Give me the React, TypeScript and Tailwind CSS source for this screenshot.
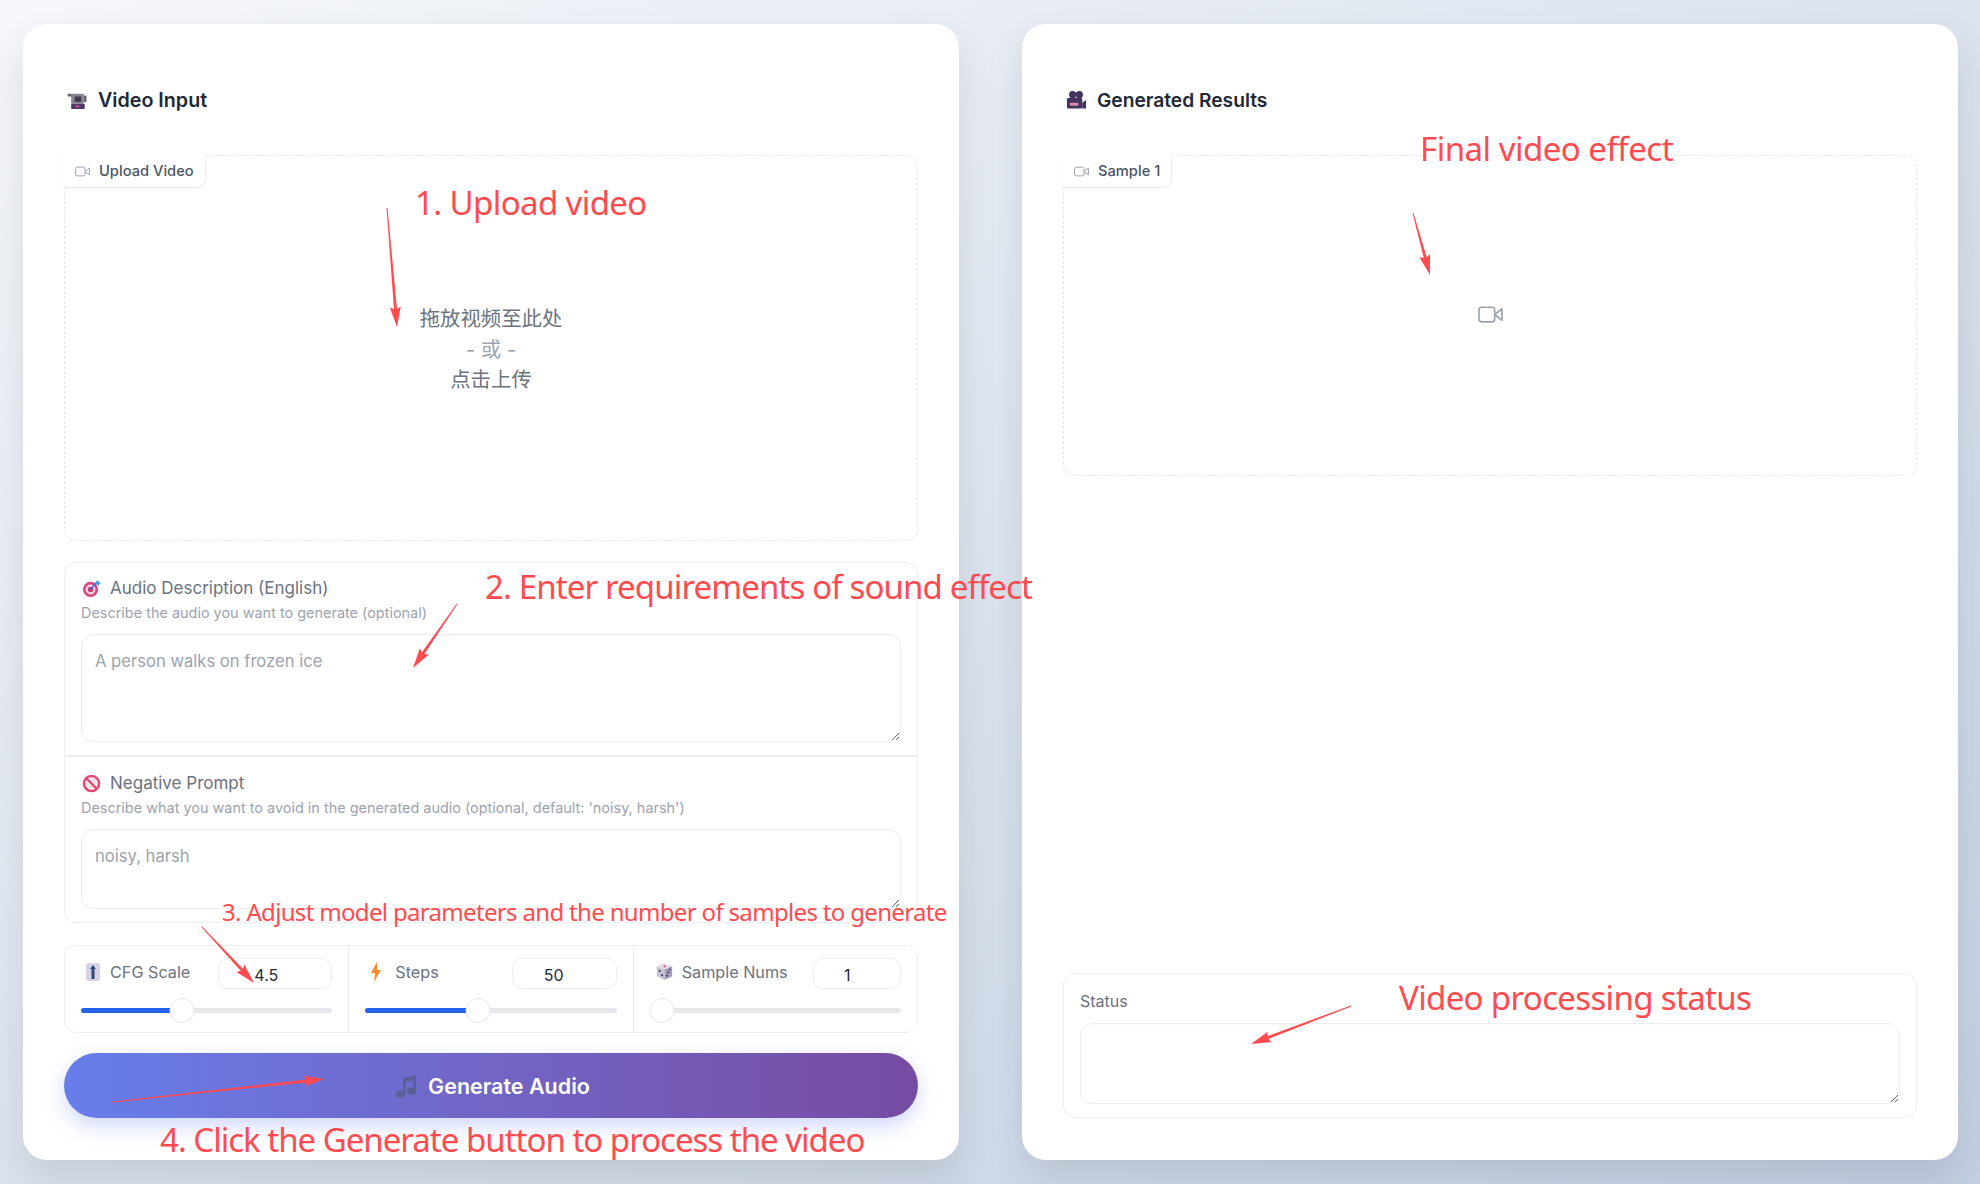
const sans = "font-['Inter','Noto_Sans_CJK_SC',sans-serif]";

function VideoGlyph({ className }: { className: string }) {
  return (
    <svg viewBox="0 0 24 16" fill="none" stroke="currentColor" strokeWidth="1.6" className={className}>
      <rect x="1" y="1" width="15" height="14" rx="2.5" />
      <path d="M16 8l7-5.5v11z" strokeLinejoin="round" />
    </svg>
  );
}

function ProjectorIcon() {
  return (
    <svg viewBox="0 0 22 20" className="h-[18px] w-[21px]">
      <path d="M0 2h6v3H0z" fill="#6b6472" />
      <rect x="4" y="2" width="14" height="11" fill="#8a8290" />
      <rect x="8" y="5" width="7" height="6" fill="#3f3a4a" />
      <rect x="18" y="4" width="3" height="7" fill="#6b6472" />
      <rect x="4" y="13" width="15" height="6" rx="1" fill="#4b3b66" />
      <rect x="9" y="15" width="4" height="2" fill="#e0567a" />
    </svg>
  );
}

function MovieCameraIcon() {
  return (
    <svg viewBox="0 0 22 20" className="h-[20px] w-[21px]">
      <circle cx="7" cy="4.5" r="3.8" fill="#43335f" />
      <circle cx="14" cy="4.5" r="3.8" fill="#43335f" />
      <rect x="1" y="8" width="16" height="11" rx="1.5" fill="#43335f" />
      <path d="M17 13l4-3v9h-4z" fill="#43335f" />
      <rect x="4" y="13" width="9" height="3" rx="1" fill="#d88aa8" />
    </svg>
  );
}

function TargetIcon() {
  return (
    <svg viewBox="0 0 20 20" className="h-[19px] w-[19px]">
      <circle cx="9" cy="11" r="8" fill="#d9467a" />
      <circle cx="9" cy="11" r="5.2" fill="#f4d7e2" />
      <circle cx="9" cy="11" r="2.8" fill="#c93a6d" />
      <path d="M9 11l7-8" stroke="#3d6fd8" strokeWidth="1.6" />
      <path d="M14 4l3-3 .5 2.5L20 4l-3 3z" fill="#3d9be8" />
    </svg>
  );
}

function BanIcon() {
  return (
    <svg viewBox="0 0 20 20" fill="none" stroke="#e8436e" strokeWidth="2.4" className="h-[19px] w-[19px]">
      <circle cx="10" cy="10" r="8" fill="#fbe3ea" />
      <path d="M4.5 4.5l11 11" />
    </svg>
  );
}

function SliderBoxIcon() {
  return (
    <svg viewBox="0 0 14 18" className="h-[18px] w-[14px]">
      <rect width="14" height="18" rx="2" fill="#d9d2e6" />
      <path d="M7 2l3 4H8.5v10h-3V6H4z" fill="#2c4a7c" />
    </svg>
  );
}

function BoltIcon() {
  return (
    <svg viewBox="0 0 12 20" className="h-[20px] w-[12px]">
      <path d="M7 0L1 11h4l-1 9 7-12H7z" fill="#f98b2b" />
    </svg>
  );
}

function DiceIcon() {
  return (
    <svg viewBox="0 0 20 20" className="h-[19px] w-[19px]">
      <path d="M10 1l8 3.5L10 8 2 4.5z" fill="#e4dfea" />
      <path d="M2 4.5L10 8v11l-8-4z" fill="#c8c0d2" />
      <path d="M18 4.5L10 8v11l8-4z" fill="#a79dba" />
      <circle cx="10" cy="4.5" r="1.2" fill="#e0436e" />
      <circle cx="5" cy="9.5" r="1.1" fill="#43335f" />
      <circle cx="7.5" cy="14" r="1.1" fill="#43335f" />
      <circle cx="15.5" cy="8" r="1" fill="#43335f" />
      <circle cx="14" cy="11" r="1" fill="#43335f" />
      <circle cx="12.5" cy="14.5" r="1" fill="#43335f" />
    </svg>
  );
}

function MusicIcon() {
  return (
    <svg viewBox="0 0 22 24" className="h-[24px] w-[22px]">
      <path d="M8 4l13-3v15h-2.500V6L10.500 8.500V20H8z" fill="#5a5f96" />
      <ellipse cx="5.500" cy="20" rx="4.500" ry="3.500" fill="#5a5f96" />
      <ellipse cx="16.500" cy="17" rx="4.500" ry="3.500" fill="#5a5f96" />
    </svg>
  );
}

function FieldLabel({ icon, title, hint }: { icon: React.ReactNode; title: string; hint: string }) {
  return (
    <>
      <div className="flex h-6 items-center gap-[9px] pl-[1px] pt-[1px] text-[17px] text-[#6b7280]">
        {icon}
        <span>{title}</span>
      </div>
      <p className="mt-[3px] h-5 text-[14.450px] leading-5 text-[#9ca3af]">{hint}</p>
    </>
  );
}

function Slider({
  icon,
  label,
  value,
  percent,
  inputWidth,
  inputPadding,
  iconGap,
}: {
  icon: React.ReactNode;
  label: string;
  value: string;
  percent: number;
  inputWidth: string;
  inputPadding: string;
  iconGap: string;
}) {
  return (
    <div className="flex flex-1 flex-col border-r border-[#e9ebef] px-4 pt-[12px] last:border-r-0">
      <div className="flex h-[31px] items-center justify-between">
        <div className={`flex items-center pb-[3px] pl-[5px] text-[16.200px] text-[#6b7280] ${iconGap}`}>
          {icon}
          <span>{label}</span>
        </div>
        <input
          readOnly
          value={value}
          className={`h-[31px] rounded-[10px] border border-[#eceef1] bg-white pt-[2px] text-[16px] text-[#1f2937] outline-none ${inputWidth} ${inputPadding}`}
        />
      </div>
      <div className="relative mt-[9px] h-[25px]">
        <div className="absolute inset-x-0 top-[10px] h-[5px] overflow-hidden rounded-full bg-[#e5e7eb]">
          <div className="h-full bg-[#2563eb]" style={{ width: `${percent}%` }} />
        </div>
        <div
          className="absolute top-0 h-[25px] w-[25px] -translate-x-1/2 rounded-full border border-[#e5e7eb] bg-white"
          style={{ left: percent === 0 ? 12 : `${percent + 4.700}%` }}
        />
      </div>
    </div>
  );
}

function Tab({ label }: { label: string }) {
  return (
    <div className="absolute -left-px -top-px flex h-[33px] items-center gap-[9px] rounded-br-[10px] border-r border-b border-[#eceef1] bg-white pl-[11px] pr-[11px] text-[14.700px] font-medium text-[#4b5563] shadow-[0_1px_2px_rgba(0,0,0,0.05)]">
      <VideoGlyph className="h-[11px] w-[15px] text-[#9ca3af]" />
      {label}
    </div>
  );
}

function Arrow({ x1, y1, x2, y2 }: { x1: number; y1: number; x2: number; y2: number }) {
  const dx = x2 - x1;
  const dy = y2 - y1;
  const len = Math.hypot(dx, dy);
  const ux = dx / len;
  const uy = dy / len;
  const nx = -uy;
  const ny = ux;
  const bx = x2 - ux * 18;
  const by = y2 - uy * 18;
  const p = (x: number, y: number) => `${x.toFixed(1)},${y.toFixed(1)}`;
  const points = [
    p(x1 + nx * 0.500, y1 + ny * 0.500),
    p(bx + nx * 1.500, by + ny * 1.500),
    p(bx + nx * 5.500 - ux * 2, by + ny * 5.500 - uy * 2),
    p(x2, y2),
    p(bx - nx * 5.500 - ux * 2, by - ny * 5.500 - uy * 2),
    p(bx - nx * 1.500, by - ny * 1.500),
    p(x1 - nx * 0.500, y1 - ny * 0.500),
  ].join(" ");
  return <polygon points={points} fill="#ff4b4f" />;
}

export default function App() {
  return (
    <div className={`relative flex h-[1184px] w-[1980px] gap-[63px] overflow-hidden bg-gradient-to-br from-[#f5f7fa] to-[#c3cfe2] pb-[24px] pl-[23px] pr-[22px] pt-[24px] ${sans}`}>
      {/* left card */}
      <section className="flex flex-1 flex-col rounded-[24px] bg-white px-[41px] pt-[62px] shadow-[0_20px_40px_rgba(0,0,0,0.1)]">
        <h2 className="flex h-[28px] items-center gap-[10px] pl-[3px] pt-[1px] text-[19.700px] font-semibold text-[#1f2937]">
          <ProjectorIcon />
          Video Input
        </h2>

        <div className="relative mt-[41px] flex h-[386px] flex-col items-center justify-center rounded-[12px] border border-dashed border-[#e5e7eb] pt-[4px] text-[20.400px] leading-[30.600px] text-[#6b7280]">
          <Tab label="Upload Video" />
          <span>拖放视频至此处</span>
          <span className="text-[#9ca3af]">- 或 -</span>
          <span>点击上传</span>
        </div>

        <div className="mt-[21px] h-[361px] rounded-[12px] border border-[#eceef1]">
          <div className="border-b-2 border-[#eceef1] px-4 pb-[13px] pt-[13px]">
            <FieldLabel icon={<TargetIcon />} title="Audio Description (English)" hint="Describe the audio you want to generate (optional)" />
            <textarea
              placeholder="A person walks on frozen ice"
              className="mt-[11px] block h-[108px] w-full rounded-[12px] border border-[#eceef1] bg-white px-[13px] py-[14px] text-[16.600px] leading-6 shadow-[inset_0_1px_2px_rgba(0,0,0,0.03)] outline-none placeholder:text-[#9ca3af]"
            />
          </div>
          <div className="px-4 pt-[14px]">
            <FieldLabel icon={<BanIcon />} title="Negative Prompt" hint="Describe what you want to avoid in the generated audio (optional, default: 'noisy, harsh')" />
            <textarea
              placeholder="noisy, harsh"
              className="mt-[11px] block h-[80px] w-full rounded-[12px] border border-[#eceef1] bg-white px-[13px] py-[14px] text-[16.600px] leading-6 shadow-[inset_0_1px_2px_rgba(0,0,0,0.03)] outline-none placeholder:text-[#9ca3af]"
            />
          </div>
        </div>

        <div className="mt-[22px] flex h-[88px] rounded-[12px] border border-[#eceef1]">
          <Slider icon={<SliderBoxIcon />} label="CFG Scale" value="4.5" percent={35.600} inputWidth="w-[114px]" inputPadding="pl-[35px]" iconGap="gap-[10px]" />
          <Slider icon={<BoltIcon />} label="Steps" value="50" percent={40} inputWidth="w-[105px]" inputPadding="pl-[31px]" iconGap="gap-[13px]" />
          <Slider icon={<DiceIcon />} label="Sample Nums" value="1" percent={0} inputWidth="w-[88px]" inputPadding="pl-[30px]" iconGap="gap-[8px]" />
        </div>

        <button className="mt-[20px] flex h-[65px] items-center justify-center gap-[11px] rounded-full bg-gradient-to-r from-[#667eea] to-[#764ba2] pl-[3px] pt-[1px] text-[21.500px] font-semibold text-white shadow-[0_8px_20px_rgba(102,126,234,0.3)]">
          <MusicIcon />
          Generate Audio
        </button>
      </section>

      {/* right card */}
      <section className="flex flex-1 flex-col rounded-[24px] bg-white px-[41px] pb-[42px] pt-[62px] shadow-[0_20px_40px_rgba(0,0,0,0.1)]">
        <h2 className="flex h-[28px] items-center gap-[10px] pl-[3px] text-[19.200px] font-semibold text-[#1f2937]">
          <MovieCameraIcon />
          Generated Results
        </h2>

        <div className="relative mt-[41px] flex h-[321px] items-center justify-center rounded-[12px] border border-dashed border-[#e5e7eb] pb-[2px]">
          <Tab label="Sample 1" />
          <VideoGlyph className="h-[17px] w-[25px] text-[#9ca3af]" />
        </div>

        <div className="mt-auto h-[145px] rounded-[12px] border border-[#eceef1] px-4 pt-[15px]">
          <div className="h-6 text-[16px] leading-6 text-[#6b7280]">Status</div>
          <textarea className="mt-[10px] block h-[81px] w-full rounded-[12px] border border-[#eceef1] bg-white shadow-[inset_0_1px_2px_rgba(0,0,0,0.03)] outline-none" />
        </div>
      </section>

      {/* red annotations drawn on top of the screenshot */}
      <svg viewBox="0 0 1980 1184" className="pointer-events-none absolute inset-0 h-[1184px] w-[1980px]">
        <Arrow x1={387} y1={208} x2={397} y2={327} />
        <Arrow x1={1413} y1={213} x2={1430} y2={275} />
        <Arrow x1={457} y1={604} x2={413} y2={668} />
        <Arrow x1={202} y1={927} x2={254} y2={983} />
        <Arrow x1={112} y1={1102} x2={324} y2={1079} />
        <Arrow x1={1351} y1={1006} x2={1251} y2={1044} />
      </svg>
      <div className="pointer-events-none absolute inset-0 whitespace-nowrap font-['Noto_Sans',sans-serif] text-[#ff4b4f]">
        <span className="absolute left-[415px] top-[180px] text-[33px] leading-[46px] tracking-[-0.600px]">1. Upload video</span>
        <span className="absolute left-[1420px] top-[126px] text-[33px] leading-[46px] tracking-[-0.500px]">Final video effect</span>
        <span className="absolute left-[485px] top-[564px] text-[33px] leading-[46px] tracking-[-0.870px]">2. Enter requirements of sound effect</span>
        <span className="absolute left-[222px] top-[897px] text-[24px] leading-[30px] tracking-[-0.670px]">3. Adjust model parameters and the number of samples to generate</span>
        <span className="absolute left-[160px] top-[1117px] text-[33px] leading-[46px] tracking-[-1px]">4. Click the Generate button to process the video</span>
        <span className="absolute left-[1399px] top-[975px] text-[33px] leading-[46px] tracking-[-0.650px]">Video processing status</span>
      </div>
    </div>
  );
}
